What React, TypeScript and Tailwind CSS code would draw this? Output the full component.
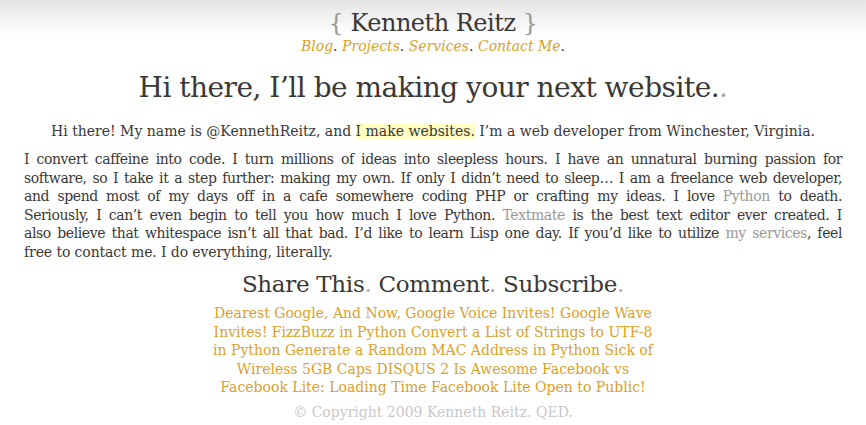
import React from 'react';

const serif = "font-['DejaVu_Serif',serif]";

const links = [
  'Dearest Google,',
  'And Now, Google Voice Invites!',
  'Google Wave Invites!',
  'FizzBuzz in Python',
  'Convert a List of Strings to UTF-8 in Python',
  'Generate a Random MAC Address in Python',
  'Sick of Wireless 5GB Caps',
  'DISQUS 2 Is Awesome',
  'Facebook vs Facebook Lite: Loading Time',
  'Facebook Lite Open to Public!',
];

const Dot = () => <span className="text-[#3d3d3d] not-italic">.</span>;

// one justified line of the about paragraph
const Line = ({ children, last }: { children: React.ReactNode; last?: boolean }) => (
  <div
    className={
      last
        ? 'text-left tracking-[-0.1px]'
        : 'text-justify [text-align-last:justify] tracking-[-0.4px] [word-spacing:-2px]'
    }
  >
    {children}
  </div>
);

export default function App() {
  return (
    <div className={`min-h-[425px] bg-gradient-to-b from-[#e4e4e4] via-white to-white bg-no-repeat bg-[length:100%_70px] text-[#3a3835] ${serif}`}>
      {/* Header */}
      <header className="flex flex-col items-center pt-[8px]">
        <h1 className="text-[24px] leading-[30px] tracking-[-0.5px]">
          <span className="text-[#9a9a9a]">{'{'}</span> Kenneth Reitz <span className="text-[#9a9a9a]">{'}'}</span>
        </h1>
        <nav className="text-[14px] leading-[16px] italic text-[#d9a12b]">
          <a>Blog</a><Dot /> <a>Projects</a><Dot /> <a>Services</a><Dot /> <a>Contact Me</a><Dot />
        </nav>
      </header>

      <main className="px-[24px]">
        <h2 className="text-center text-[28px] leading-[36px] mt-[16px] tracking-[-0.5px]">
          Hi there, I’ll be making your next website.<span className="text-[#aaa]">.</span>
        </h2>

        <p className="text-center text-[14px] leading-[18px] mt-[16px]">
          Hi there! My name is @KennethReitz, and <span className="bg-[#ffffc4]">I make websites.</span> I’m a web developer from Winchester, Virginia.
        </p>

        <div className="text-[14px] leading-[18.5px] mt-[10px]">
          <Line>I convert caffeine into code. I turn millions of ideas into sleepless hours. I have an unnatural burning passion for</Line>
          <Line>software, so I take it a step further: making my own. If only I didn’t need to sleep… I am a freelance web developer,</Line>
          <Line>and spend most of my days off in a cafe somewhere coding PHP or crafting my ideas. I love <a className="text-[#999]">Python</a> to death.</Line>
          <Line>Seriously, I can’t even begin to tell you how much I love Python. <a className="text-[#999]">Textmate</a> is the best text editor ever created. I</Line>
          <Line>also believe that whitespace isn’t all that bad. I’d like to learn Lisp one day. If you’d like to utilize <a className="text-[#999]">my services</a>, feel</Line>
          <Line last>free to contact me. I do everything, literally.</Line>
        </div>

        <h3 className="text-center text-[23px] leading-[28px] mt-[9px] tracking-[-0.3px]">
          Share This<span className="text-[#aaa]">.</span> Comment<span className="text-[#aaa]">.</span> Subscribe<span className="text-[#aaa]">.</span>
        </h3>

        <div className="mx-auto w-[450px] text-center text-[14px] leading-[18.5px] text-[#d9a12b] mt-[6px]">
          {links.map((l, i) => (
            <React.Fragment key={i}>
              <a>{l}</a>{i < links.length - 1 ? ' ' : ''}
            </React.Fragment>
          ))}
        </div>

        <footer className="text-center text-[14px] leading-[18px] text-[#c8c8c8] mt-[6px]">
          © Copyright 2009 Kenneth Reitz. QED.
        </footer>
      </main>
    </div>
  );
}
